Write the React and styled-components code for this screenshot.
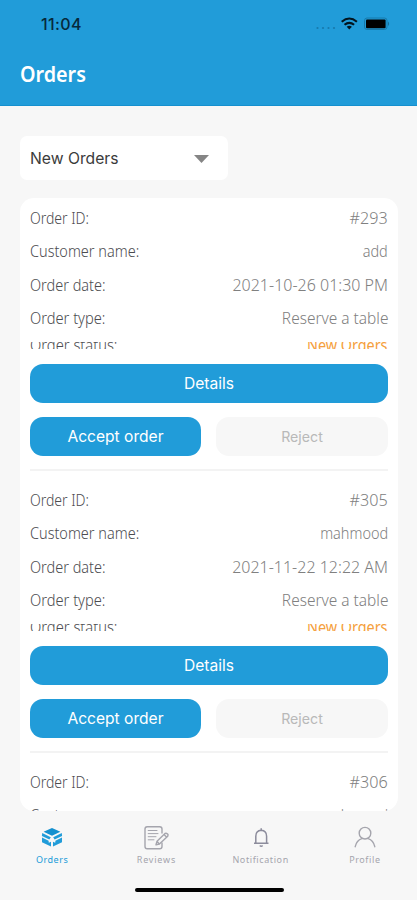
import React from 'react';
import styled, { createGlobalStyle } from 'styled-components';

const Global = createGlobalStyle`
  *, *::before, *::after { box-sizing: border-box; }
  body { margin: 0; background: #f7f7f7; font-family: "Noto Sans", "Open Sans", sans-serif; }
  button { border: 0; padding: 0; margin: 0; }
`;

const Screen = styled.main`
  width: 417px;
  height: 900px;
  overflow: hidden;
  display: flex;
  flex-direction: column;
  background: #f7f7f7;
`;

const Header = styled.header`
  flex: none;
  height: 106px;
  background: #219cd9;
  border-bottom: 1px solid #1590cf;
`;

const StatusBar = styled.div`
  height: 48px;
  padding: 0 27px 0 41px;
  display: flex;
  align-items: center;
  justify-content: space-between;
`;

const Clock = styled.span`
  font: 500 16px/20px Inter, sans-serif;
  letter-spacing: 0.4px;
  color: #06293c;
`;

const Title = styled.h1`
  margin: 11px 0 0 20px;
  font-size: 21px;
  line-height: 30px;
  font-weight: 600;
  color: #fff;
  white-space: nowrap;
  transform: scaleX(${(p) => p.$stretch});
  transform-origin: left;
`;

const Select = styled.button`
  flex: none;
  width: 208px;
  height: 44px;
  margin: 30px 0 0 20px;
  padding: 1px 19px 0 10px;
  display: flex;
  align-items: center;
  justify-content: space-between;
  border-radius: 7px;
  background: #fff;
  color: #3b3b3b;
  font: 400 15.7px/21px Inter, sans-serif;
`;

const List = styled.section`
  flex: none;
  width: 378px;
  height: 613px;
  margin: 18px 0 0 20px;
  padding: 3px 10px 0;
  border-radius: 14px;
  background: #fff;
  overflow: hidden;
`;

const Order = styled.article`
  height: ${(p) => (p.$preview ? 'auto' : '282px')};
`;

const Row = styled.div`
  height: 33.5px;
  display: flex;
  align-items: center;
  justify-content: space-between;
`;

const StatusRow = styled(Row)`
  height: 7.5px;
  margin: 6.5px 0 15px;
  overflow: hidden;
`;

const Label = styled.span`
  font-size: 16px;
  line-height: 22px;
  white-space: nowrap;
  font-weight: 350;
  color: #4c4c50;
  transform: scaleX(${(p) => p.$stretch || 0.905});
  transform-origin: left;
`;

const Value = styled(Label)`
  font-weight: ${(p) => (p.$accent ? 400 : 300)};
  color: ${(p) => (p.$accent ? '#f5a03c' : '#808080')};
  transform-origin: right;
`;

const Button = styled.button`
  width: 100%;
  height: 38.5px;
  padding-top: 1px;
  border-radius: 13px;
  background: ${(p) => (p.$muted ? '#f7f7f7' : '#219cd9')};
  color: ${(p) => (p.$muted ? '#b9b9b9' : '#fff')};
  font: 400 ${(p) => (p.$muted ? 14.2 : 15.6)}px/20px Inter, sans-serif;
`;

const Actions = styled.div`
  display: grid;
  grid-template-columns: 171px 172px;
  justify-content: space-between;
  margin-top: 14.5px;
`;

const Divider = styled.hr`
  border: 0;
  height: 2px;
  margin: 13.5px 0 0;
  background: #f3f3f3;
`;

const Nav = styled.nav`
  flex: none;
  height: 77px;
  padding-top: 14px;
  display: grid;
  grid-template-columns: repeat(4, 1fr);
`;

const Tab = styled.a`
  display: flex;
  flex-direction: column;
  align-items: center;
  color: ${(p) => (p.$active ? '#219cd9' : '#a5a5ad')};
  svg { display: block; }
`;

const TabLabel = styled.span`
  margin-top: 3px;
  font: 400 9px/12px "Noto Sans", sans-serif;
  letter-spacing: ${(p) => p.$spacing}px;
`;

const HomeIndicator = styled.div`
  flex: none;
  width: 149px;
  height: 4px;
  margin-left: 135px;
  border-radius: 2px;
  background: #000;
`;

const StatusIcons = () => (
  <svg width="76" height="16" viewBox="0 0 76 16">
    <g fill="#177aac">
      <circle cx="3.5" cy="12" r="1.1" /><circle cx="9" cy="12" r="1.1" />
      <circle cx="14.5" cy="12" r="1.1" /><circle cx="20" cy="12" r="1.1" />
    </g>
    <g fill="none" stroke="#03151f" strokeWidth="2.1">
      <path d="M27.7 5.7Q35.3-.7 42.9 5.7" />
      <path d="M30.5 8.8Q35.3 4.8 40.1 8.8" />
    </g>
    <path d="M32.7 10.8Q35.3 8.7 37.9 10.8L35.3 13.4Z" fill="#03151f" />
    <rect x="50.5" y="2" width="22.5" height="11.5" rx="2.5" fill="none" stroke="#177aac" />
    <rect x="52" y="3.4" width="19.6" height="8.8" rx="1" fill="#000" />
    <path d="M74 5.5Q76.2 7.7 74 10Z" fill="#176e9b" />
  </svg>
);

const BoxIcon = () => (
  <svg width="24" height="26" viewBox="0 0 24 26" fill="currentColor">
    <path d="M12 3L20.4 6.8 12 10.8 3.6 6.8Z" fill="#1490cf" />
    <path d="M2.2 8L10.8 12.2 9.4 14.4 1.9 10.9Z" />
    <path d="M21.8 8L13.2 12.2 14.6 14.4 22.1 10.9Z" />
    <path d="M2 12.6L8.6 15.7 8.8 17.8 11 16.8V21.6L2 17.2Z" />
    <path d="M22 12.6L15.4 15.7 15.2 17.8 13 16.8V21.6L22 17.2Z" />
  </svg>
);

const ReviewIcon = () => (
  <svg width="26" height="26" viewBox="0 0 26 26" fill="none" stroke="currentColor" strokeWidth="1.4" strokeLinejoin="round" strokeLinecap="round">
    <path d="M19 8V4Q19 1.7 16.7 1.7H4.2Q2 1.7 2 4V21.5Q2 23.8 4.2 23.8H16.7Q19 23.8 19 21.5V18" />
    <path d="M5.2 5.5H14M5.2 8.6H15M5.2 11.7H13M5.2 14.8H11" strokeWidth="1" />
    <path d="M13 19.8L14 16.2 22 8.5Q23.8 7.8 25 9.5 25.2 11 24.2 11.8L16.4 19.1ZM21 9.5L23.5 12M14 16.2L16.4 19.1" />
  </svg>
);

const BellIcon = () => (
  <svg width="24" height="26" viewBox="0 0 24 26" fill="none" stroke="#8c8c9c" strokeWidth="1.5" strokeLinejoin="round">
    <path d="M5 18.2H19.5M6.8 18V11.2Q6.8 5.7 12.2 5.3 17.6 5.7 17.6 11.2V18M12.2 3.2V5.3" />
    <path d="M10.8 20.4Q12.2 22 13.6 20.4" />
  </svg>
);

const ProfileIcon = () => (
  <svg width="24" height="26" viewBox="0 0 24 26" fill="none" stroke="currentColor" strokeWidth="1.4" strokeLinecap="round">
    <circle cx="12" cy="8.2" r="5.8" />
    <path d="M2.2 21.7Q3.6 15.2 8.8 13.6M15.2 13.6Q20.4 15.2 21.8 21.7" />
  </svg>
);

const orders = [
  { id: '#293', name: 'add', date: '2021-10-26 01:30 PM' },
  { id: '#305', name: 'mahmood', date: '2021-11-22 12:22 AM' },
  { id: '#306', name: 'mahmood', preview: true },
];

const tabs = [
  { label: 'Orders', Icon: BoxIcon, spacing: 0.5, active: true },
  { label: 'Reviews', Icon: ReviewIcon, spacing: 0.8 },
  { label: 'Notification', Icon: BellIcon, spacing: 0.6 },
  { label: 'Profile', Icon: ProfileIcon, spacing: 0.6 },
];

export default function App() {
  return (
    <>
      <Global />
      <Screen>
        <Header>
          <StatusBar>
            <Clock>11:04</Clock>
            <StatusIcons />
          </StatusBar>
          <Title $stretch={0.94}>Orders</Title>
        </Header>
        <Select>
          New Orders
          <svg width="15" height="8" viewBox="0 0 15 8"><path d="M0 0H15L7.5 8Z" fill="#858585" /></svg>
        </Select>
        <List>
          {orders.map((o) => (
            <Order key={o.id} $preview={o.preview}>
              <Row><Label $stretch={0.875}>Order ID:</Label><Value $stretch={1.01}>{o.id}</Value></Row>
              <Row><Label>Customer name:</Label><Value>{o.name}</Value></Row>
              {!o.preview && (
                <>
                  <Row><Label>Order date:</Label><Value $stretch={1}>{o.date}</Value></Row>
                  <Row><Label $stretch={0.915}>Order type:</Label><Value $stretch={0.965}>Reserve a table</Value></Row>
                  <StatusRow>
                    <Label $stretch={0.92}>Order status:</Label>
                    <Value $accent $stretch={0.9}>New Orders</Value>
                  </StatusRow>
                  <Button>Details</Button>
                  <Actions>
                    <Button>Accept order</Button>
                    <Button $muted>Reject</Button>
                  </Actions>
                  <Divider />
                </>
              )}
            </Order>
          ))}
        </List>
        <Nav>
          {tabs.map(({ label, Icon, spacing, active }) => (
            <Tab key={label} $active={active}>
              <Icon />
              <TabLabel $spacing={spacing}>{label}</TabLabel>
            </Tab>
          ))}
        </Nav>
        <HomeIndicator />
      </Screen>
    </>
  );
}
